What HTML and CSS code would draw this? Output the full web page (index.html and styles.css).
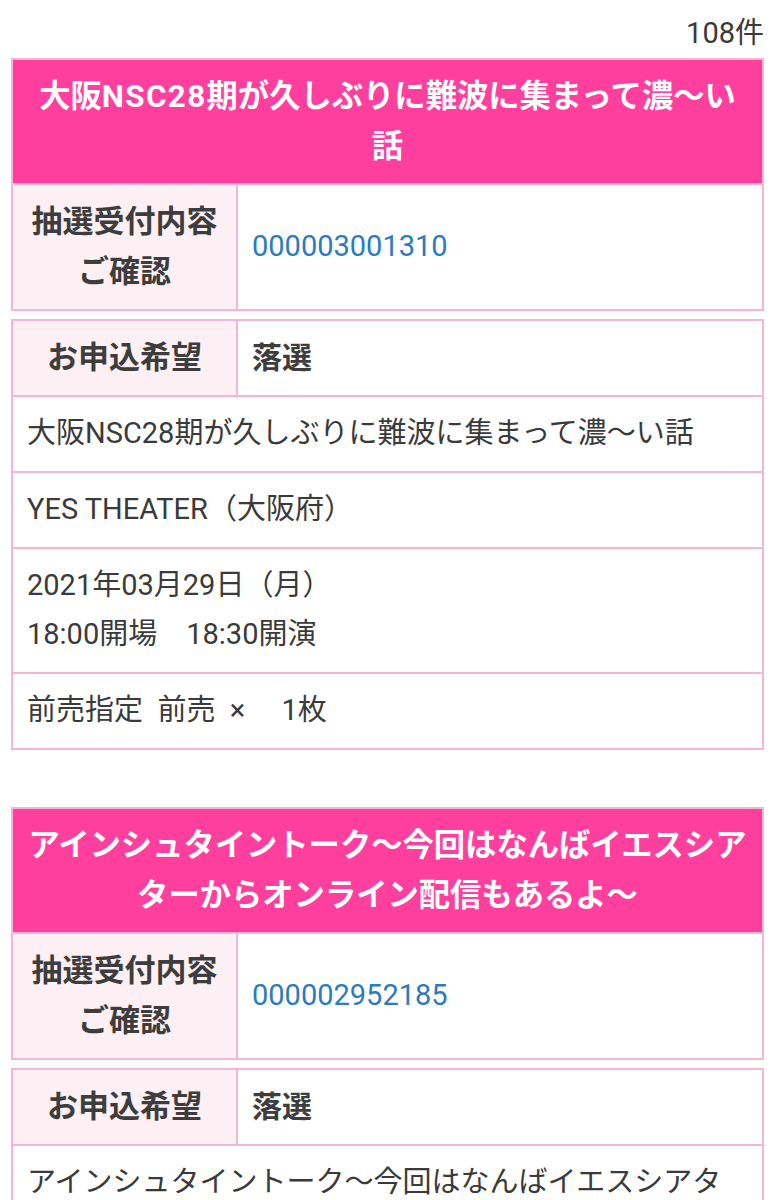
FILE: index.html
```html
<!DOCTYPE html>
<html lang="ja">
<head>
<meta charset="utf-8">
<title>抽選受付一覧</title>
<link rel="stylesheet" href="styles.css">
</head>
<body>
<div class="page">
  <div class="count">108件</div>

  <div class="item">
    <table class="entry summary">
      <colgroup><col class="col-label"><col></colgroup>
      <tr><th class="title" colspan="2">大阪<span class="latin">NSC28</span>期が久しぶりに難波に集まって濃〜い話</th></tr>
      <tr>
        <th class="label">抽選受付内容ご確認</th>
        <td class="value"><a class="link" href="#">000003001310</a></td>
      </tr>
    </table>
    <table class="entry detail">
      <colgroup><col class="col-label"><col></colgroup>
      <tr>
        <th class="label">お申込希望</th>
        <td class="value result">落選</td>
      </tr>
      <tr><td class="info" colspan="2">大阪NSC28期が久しぶりに難波に集まって濃〜い話</td></tr>
      <tr><td class="info" colspan="2">YES THEATER（大阪府）</td></tr>
      <tr><td class="info" colspan="2">2021年03月29日（月）<br>18:00開場　18:30開演</td></tr>
      <tr><td class="info" colspan="2">前売指定&nbsp; 前売&nbsp; ×　 1枚</td></tr>
    </table>
  </div>

  <div class="item">
    <table class="entry summary">
      <colgroup><col class="col-label"><col></colgroup>
      <tr><th class="title" colspan="2">アインシュタイントーク〜今回はなんばイエスシアターからオンライン配信もあるよ〜</th></tr>
      <tr>
        <th class="label">抽選受付内容ご確認</th>
        <td class="value"><a class="link" href="#">000002952185</a></td>
      </tr>
    </table>
    <table class="entry detail">
      <colgroup><col class="col-label"><col></colgroup>
      <tr>
        <th class="label">お申込希望</th>
        <td class="value result">落選</td>
      </tr>
      <tr><td class="info" colspan="2">アインシュタイントーク〜今回はなんばイエスシアターからオンライン配信もあるよ〜</td></tr>
      <tr><td class="info" colspan="2">YES THEATER（大阪府）</td></tr>
      <tr><td class="info" colspan="2">2021年03月25日（木）<br>19:00開場　19:30開演</td></tr>
      <tr><td class="info" colspan="2">前売指定&nbsp; 前売&nbsp; ×　 1枚</td></tr>
    </table>
  </div>
</div>
</body>
</html>
```

FILE: styles.css
```css
html, body {
  margin: 0;
  padding: 0;
  background: #ffffff;
}

body {
  font-family: "Roboto", "Noto Sans CJK JP", sans-serif;
  color: #333333;
  font-size: 29px;
}

.page {
  padding: 8px 12px 0 11px;
}

.count {
  text-align: right;
  line-height: 50px;
  font-size: 29px;
  color: #3a3a3a;
}

.item {
  margin-bottom: 57px;
}

.entry {
  width: 100%;
  border-collapse: collapse;
  table-layout: fixed;
  border: 2px solid #f5b6d6;
}

.col-label {
  width: 225px;
}

.summary {
  margin-bottom: 8px;
}

.entry th,
.entry td {
  border: 2px solid #f5b6d6;
  line-height: 49.5px;
  padding: 12.25px 14px;
  vertical-align: middle;
}

.title {
  background: #ff3f9e;
  color: #ffffff;
  font-size: 31.3px;
  font-weight: 700;
  text-align: center;
}

.entry .title {
  padding: 11.5px 12px;
  line-height: 50px;
}

.latin {
  letter-spacing: 1.4px;
}

.label {
  background: #fdf0f5;
  color: #3d3d3d;
  font-size: 31px;
  font-weight: 700;
  text-align: center;
}

.value {
  text-align: left;
  font-size: 29px;
}

.result {
  font-weight: 700;
  font-size: 30px;
  color: #3d3d3d;
}

.link {
  color: #2b7bbd;
  text-decoration: none;
}

.info {
  text-align: left;
  font-size: 29px;
  color: #3a3a3a;
}
```
